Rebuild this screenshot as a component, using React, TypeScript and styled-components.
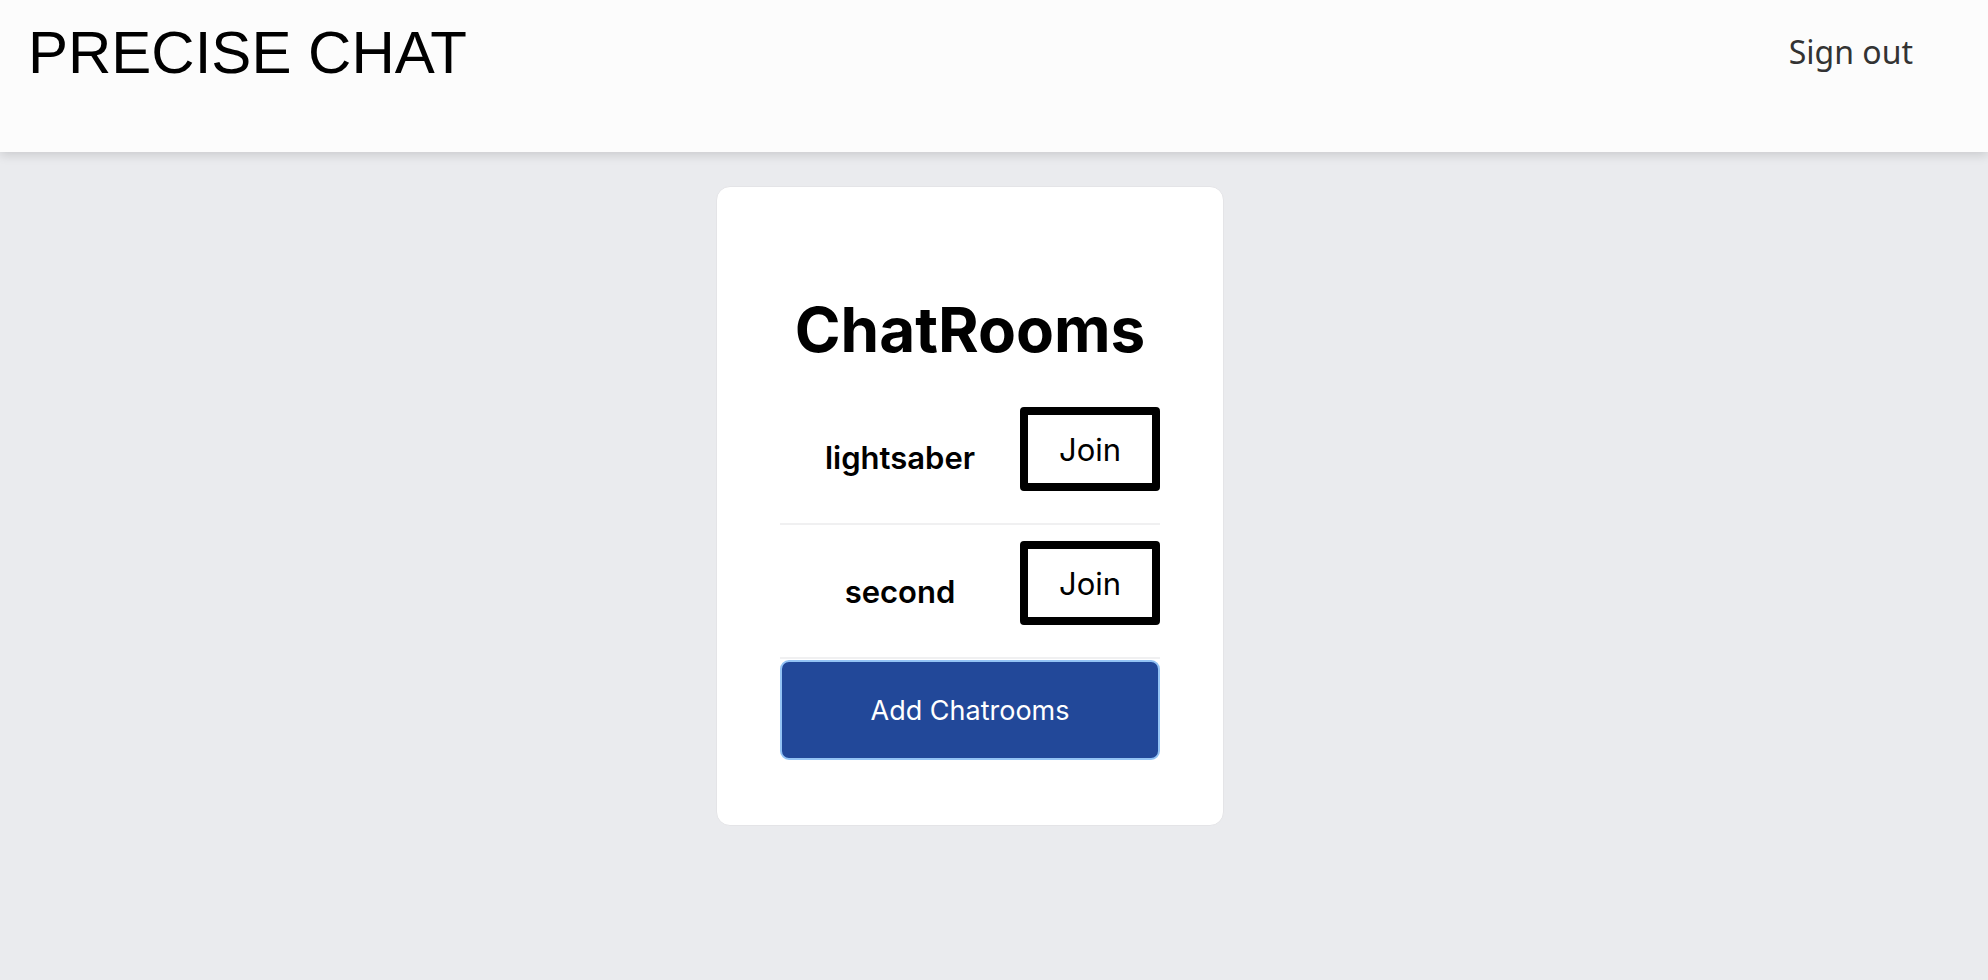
import React from "react";
import styled, { createGlobalStyle } from "styled-components";

const GlobalStyle = createGlobalStyle`
  body {
    margin: 0;
    background: #eaebee;
    font-family: Inter, "Noto Sans", sans-serif;
  }
`;

const rooms = ["lightsaber", "second"];

const App = () => {
  return (
    <>
      <GlobalStyle />
      <Header>
        <Logo>PRECISE CHAT</Logo>
        <SignOut>Sign out</SignOut>
      </Header>
      <Main>
        <Card>
          <Title>ChatRooms</Title>
          {rooms.map((room) => (
            <RoomRow key={room}>
              <RoomName>{room}</RoomName>
              <JoinButton>Join</JoinButton>
            </RoomRow>
          ))}
          <AddButton>Add Chatrooms</AddButton>
        </Card>
      </Main>
    </>
  );
};

const Header = styled.header`
  height: 152px;
  box-sizing: border-box;
  display: flex;
  justify-content: space-between;
  align-items: flex-start;
  padding: 0 75px 0 28px;
  background: #fcfcfc;
  box-shadow: 0 3px 10px rgba(0, 0, 0, 0.14);
  position: relative;
`;

const Logo = styled.h1`
  margin: 23px 0 0;
  font-family: "Liberation Sans", Arial, sans-serif;
  font-weight: 400;
  font-size: 60px;
  line-height: 60px;
  color: #000;
`;

const SignOut = styled.span`
  margin-top: 36px;
  font-family: "Noto Sans", sans-serif;
  font-size: 32px;
  line-height: 32px;
  color: #333;
  cursor: pointer;
`;

const Main = styled.main`
  display: flex;
  justify-content: center;
  padding: 34px 48px 0 0;
`;

const Card = styled.div`
  width: 508px;
  box-sizing: border-box;
  padding: 106px 63px 65px;
  background: #ffffff;
  border: 1px solid #e4e4e7;
  border-radius: 14px;
  display: flex;
  flex-direction: column;
`;

const Title = styled.h2`
  margin: 0 0 24px;
  text-align: center;
  font-size: 62px;
  line-height: 74px;
  font-weight: 700;
  color: #000;
`;

const RoomRow = styled.div`
  height: 134px;
  box-sizing: border-box;
  display: flex;
  align-items: center;
  border-bottom: 2px solid #f0f0f1;
`;

const RoomName = styled.span`
  flex: 1;
  text-align: center;
  font-size: 31px;
  font-weight: 600;
  color: #000;
`;

const JoinButton = styled.button`
  width: 140px;
  height: 84px;
  margin-bottom: 16px;
  box-sizing: border-box;
  border: 8px solid #000;
  border-radius: 4px;
  background: #fff;
  font-family: Inter, sans-serif;
  font-size: 31px;
  color: #000;
  cursor: pointer;
`;

const AddButton = styled.button`
  margin-top: 1px;
  height: 100px;
  box-sizing: border-box;
  border: 2px solid #93c3f5;
  border-radius: 9px;
  background: #224899;
  color: #fff;
  font-family: Inter, sans-serif;
  font-size: 27px;
  cursor: pointer;
`;

export default App;
